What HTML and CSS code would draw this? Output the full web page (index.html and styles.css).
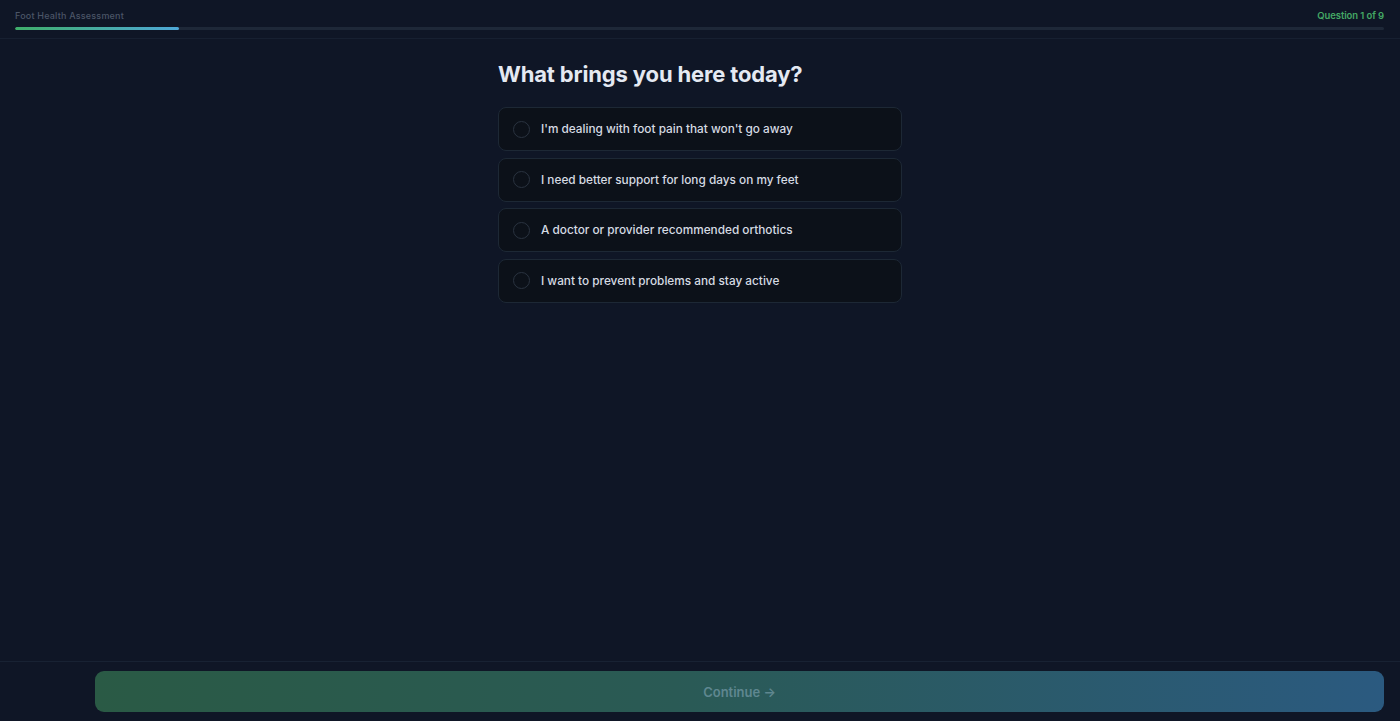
FILE: index.html
```html
<!DOCTYPE html>
<html lang="en">
<head>
<meta charset="utf-8">
<title>Foot Health Assessment</title>
<link rel="stylesheet" href="styles.css">
</head>
<body>
<div class="app">
  <header class="topbar">
    <div class="topbar-row">
      <span class="brand">Foot Health Assessment</span>
      <span class="step">Question 1 of 9</span>
    </div>
    <div class="track"><div class="fill" style="width:12%"></div></div>
  </header>
  <main class="content">
    <div class="quiz">
      <h1 class="question">What brings you here today?</h1>
      <div class="options">
        <button class="option"><span class="radio"></span><span class="label">I'm dealing with foot pain that won't go away</span></button>
        <button class="option"><span class="radio"></span><span class="label">I need better support for long days on my feet</span></button>
        <button class="option"><span class="radio"></span><span class="label">A doctor or provider recommended orthotics</span></button>
        <button class="option"><span class="radio"></span><span class="label">I want to prevent problems and stay active</span></button>
      </div>
    </div>
  </main>
  <footer class="footer">
    <div class="spacer"></div>
    <button class="continue" disabled>Continue →</button>
  </footer>
</div>
</body>
</html>
```
FILE: styles.css
```css
* { box-sizing: border-box; }
html, body { margin: 0; padding: 0; height: 100%; }
body {
  background: #0f1626;
  font-family: Inter, "Noto Sans", sans-serif;
  color: #e5e9f0;
}
.app {
  height: 721px;
  display: flex;
  flex-direction: column;
}
.topbar {
  padding: 8px 16px 8px 15px;
  border-bottom: 1px solid #172031;
}
.topbar-row {
  display: flex;
  justify-content: space-between;
  align-items: center;
  height: 14px;
}
.brand {
  font-size: 9px;
  font-weight: 500;
  color: #4b5566;
  letter-spacing: 0.2px;
}
.step {
  font-size: 9.5px;
  font-weight: 600;
  color: #44a865;
  letter-spacing: -0.1px;
}
.track {
  margin-top: 5px;
  height: 3px;
  background: #1e2838;
  border-radius: 2px;
  overflow: hidden;
}
.fill {
  height: 100%;
  background: linear-gradient(90deg, #3fae6a, #4ea8d8);
  border-radius: 2px;
}
.content {
  flex: 1;
  display: flex;
  justify-content: center;
}
.quiz {
  width: 404px;
  padding-top: 20px;
}
.question {
  margin: 0 0 18px;
  font-family: Inter, sans-serif;
  font-size: 22px;
  font-weight: 700;
  letter-spacing: -0.15px;
  color: #e4e9f2;
  line-height: 30px;
}
.options {
  display: flex;
  flex-direction: column;
  gap: 6.5px;
}
.option {
  display: flex;
  align-items: center;
  gap: 11px;
  height: 44px;
  padding: 0 14px;
  background: #0c1119;
  border: 1px solid #1d2835;
  border-radius: 8px;
  font-family: Inter, sans-serif;
  text-align: left;
  cursor: pointer;
}
.radio {
  width: 17px;
  height: 17px;
  border: 1.5px solid #2a3340;
  border-radius: 50%;
  flex: none;
}
.label {
  font-size: 11.8px;
  font-weight: 500;
  color: #d6dbe3;
}
.footer {
  border-top: 1px solid #182233;
  padding: 9px 16px 9px 15px;
  display: flex;
  gap: 8px;
}
.spacer { width: 72px; flex: none; }
.continue {
  flex: 1;
  height: 41px;
  border: none;
  border-radius: 9px;
  background: linear-gradient(90deg, #2a5a45, #2a5a55 45%, #2b5a80);
  color: #5f8790;
  font-family: Inter, sans-serif;
  font-size: 13px;
  font-weight: 600;
}
```
